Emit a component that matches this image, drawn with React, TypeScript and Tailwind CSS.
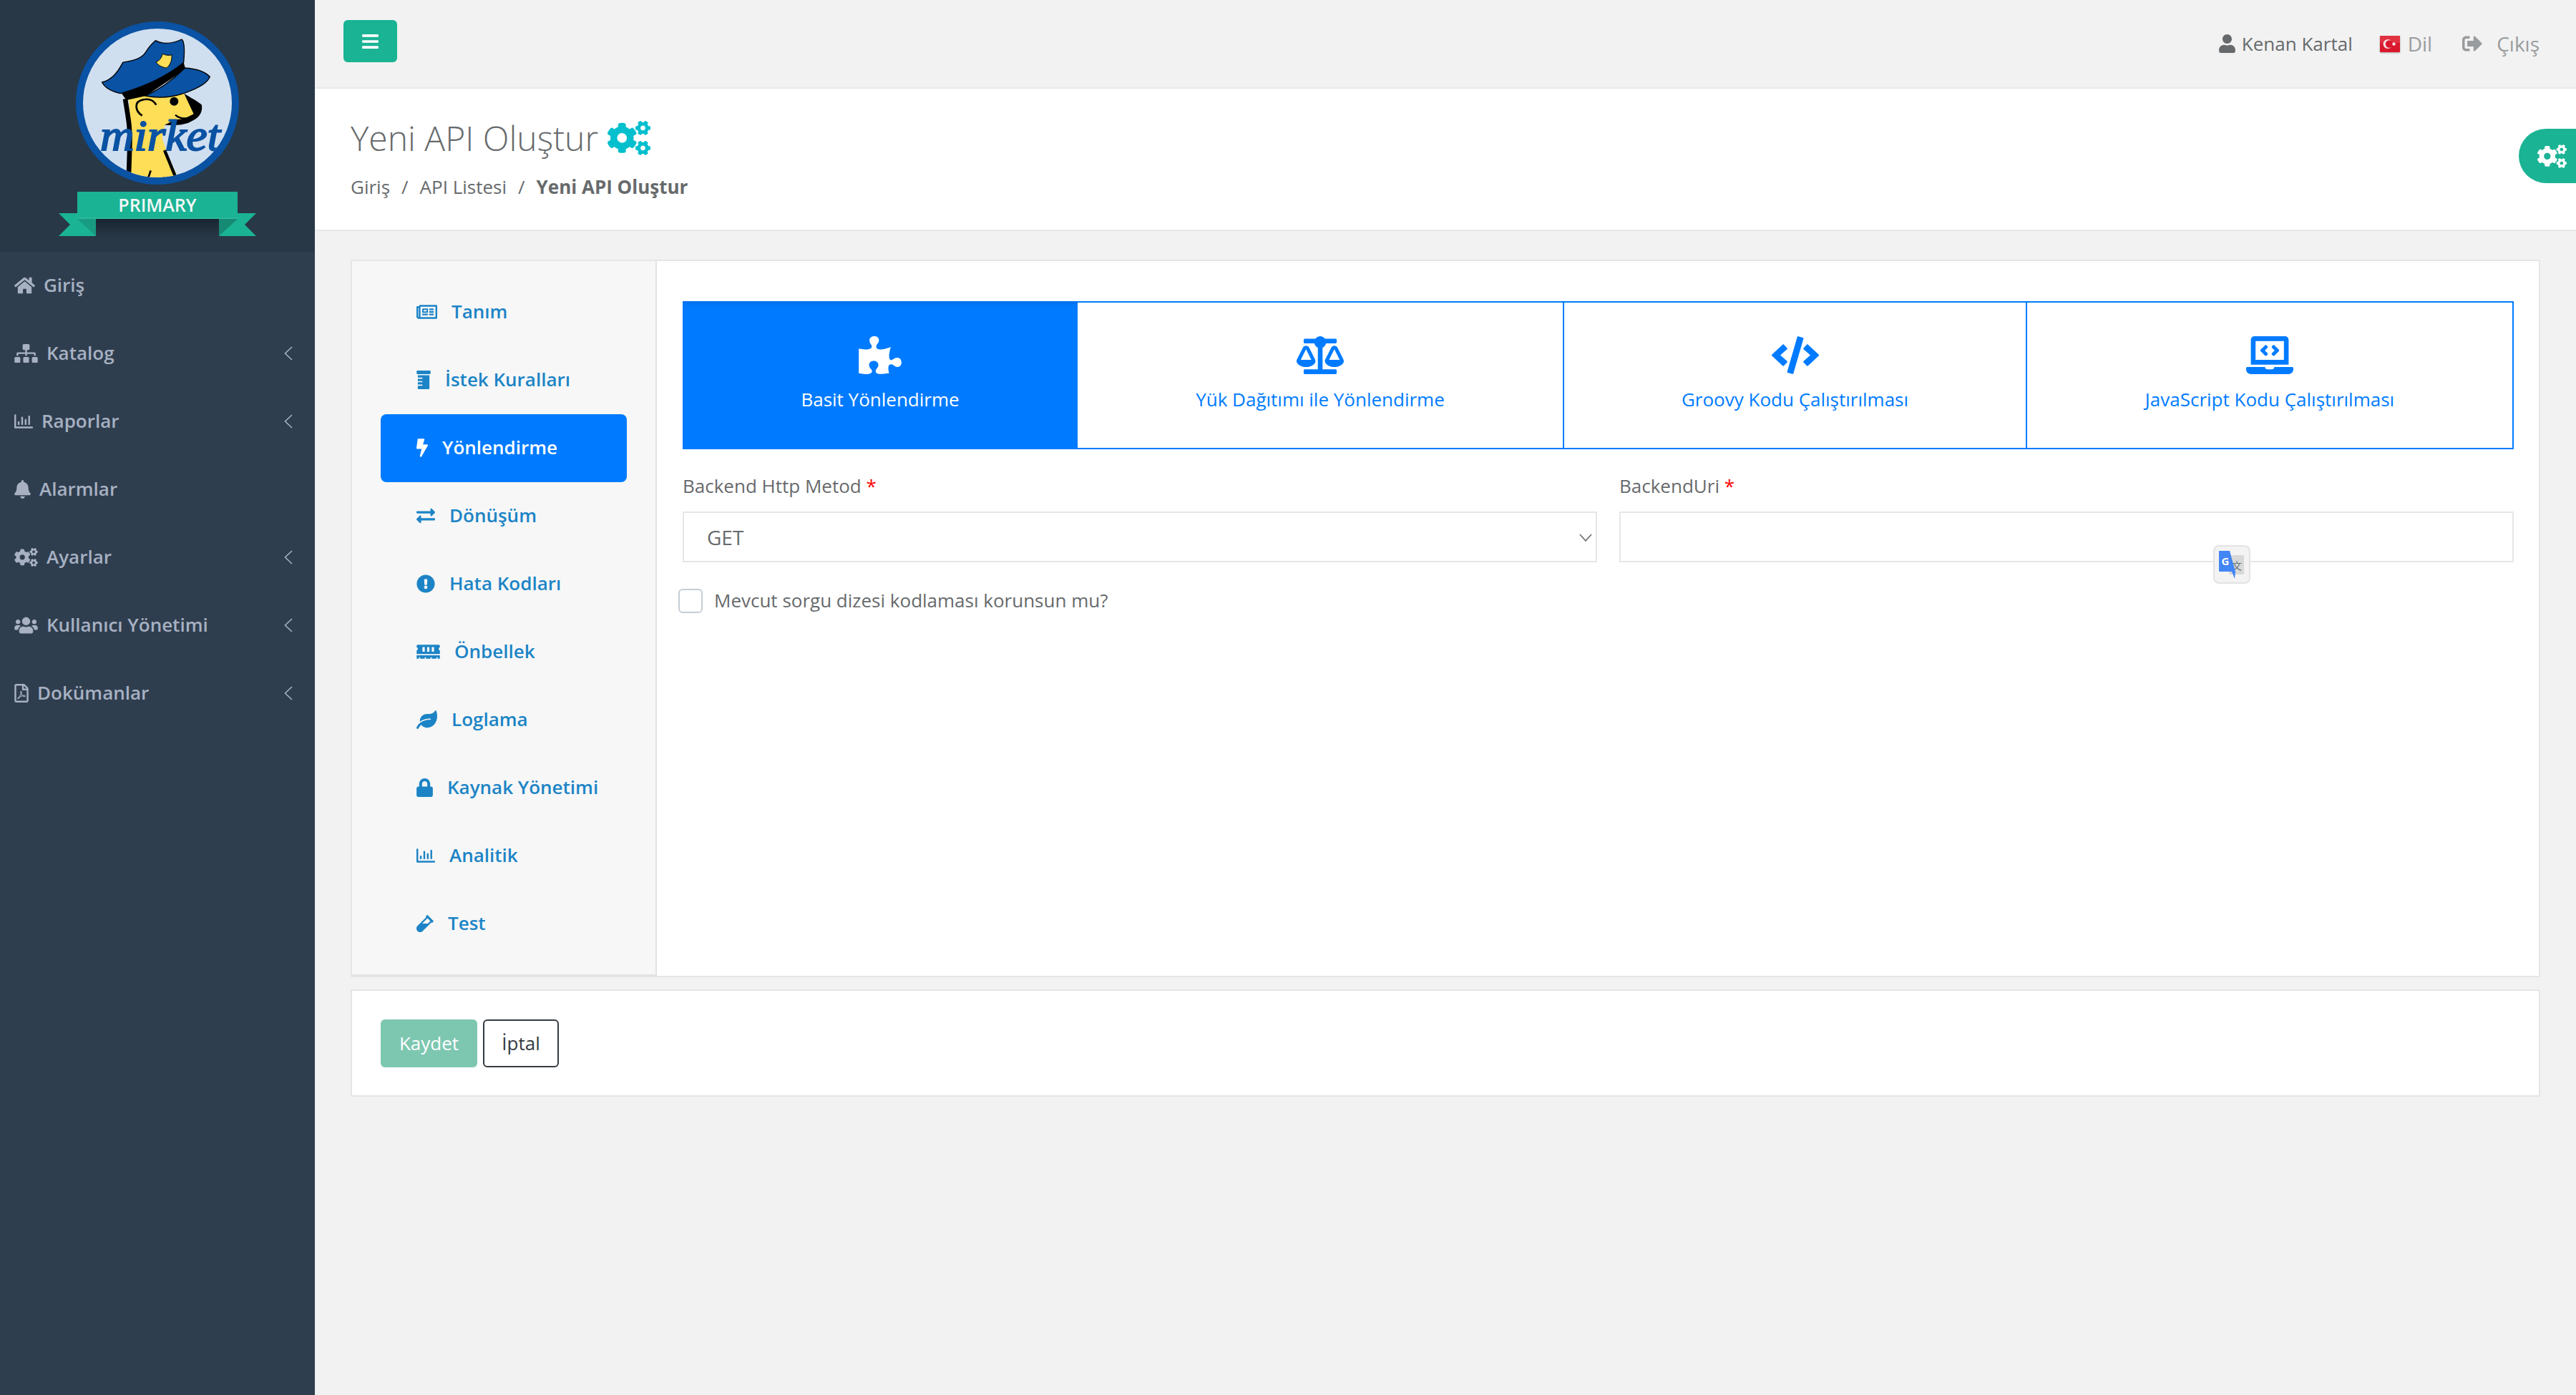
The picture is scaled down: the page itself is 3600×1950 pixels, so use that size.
import type { ReactNode } from "react";
import {
  FaBalanceScale,
  FaBars,
  FaBell,
  FaBolt,
  FaCode,
  FaCogs,
  FaExchangeAlt,
  FaExclamationCircle,
  FaHome,
  FaLaptopCode,
  FaLeaf,
  FaLock,
  FaMemory,
  FaPrescriptionBottle,
  FaPuzzlePiece,
  FaRegChartBar,
  FaRegFilePdf,
  FaRegNewspaper,
  FaSignOutAlt,
  FaSitemap,
  FaUser,
  FaUsers,
  FaVial,
} from "react-icons/fa";

const menu: { label: string; icon: ReactNode; arrow?: boolean }[] = [
  { label: "Giriş", icon: <FaHome className="h-[26px] w-[29px]" /> },
  { label: "Katalog", icon: <FaSitemap className="h-[26px] w-[33px]" />, arrow: true },
  { label: "Raporlar", icon: <FaRegChartBar className="h-[26px] w-[26px]" />, arrow: true },
  { label: "Alarmlar", icon: <FaBell className="h-[26px] w-[23px]" /> },
  { label: "Ayarlar", icon: <FaCogs className="h-[26px] w-[33px]" />, arrow: true },
  { label: "Kullanıcı Yönetimi", icon: <FaUsers className="h-[26px] w-[33px]" />, arrow: true },
  { label: "Dokümanlar", icon: <FaRegFilePdf className="h-[26px] w-[20px]" />, arrow: true },
];

const steps: { label: string; icon: ReactNode; active?: boolean }[] = [
  { label: "Tanım", icon: <FaRegNewspaper className="h-[26px] w-[29px]" /> },
  { label: "İstek Kuralları", icon: <FaPrescriptionBottle className="h-[26px] w-[20px]" /> },
  { label: "Yönlendirme", icon: <FaBolt className="h-[26px] w-[16px]" />, active: true },
  { label: "Dönüşüm", icon: <FaExchangeAlt className="h-[26px] w-[26px]" /> },
  { label: "Hata Kodları", icon: <FaExclamationCircle className="h-[26px] w-[26px]" /> },
  { label: "Önbellek", icon: <FaMemory className="h-[26px] w-[33px]" /> },
  { label: "Loglama", icon: <FaLeaf className="h-[26px] w-[29px]" /> },
  { label: "Kaynak Yönetimi", icon: <FaLock className="h-[26px] w-[23px]" /> },
  { label: "Analitik", icon: <FaRegChartBar className="h-[26px] w-[26px]" /> },
  { label: "Test", icon: <FaVial className="h-[26px] w-[24px]" /> },
];

const routes: { label: string; icon: ReactNode; width: string; active?: boolean }[] = [
  { label: "Basit Yönlendirme", icon: <FaPuzzlePiece className="h-[53px] w-[60px]" />, width: "w-[552px]", active: true },
  { label: "Yük Dağıtımı ile Yönlendirme", icon: <FaBalanceScale className="h-[53px] w-[66px]" />, width: "w-[680px]" },
  { label: "Groovy Kodu Çalıştırılması", icon: <FaCode className="h-[53px] w-[66px]" />, width: "w-[647px]" },
  { label: "JavaScript Kodu Çalıştırılması", icon: <FaLaptopCode className="h-[53px] w-[66px]" />, width: "flex-1" },
];

function Logo() {
  return (
    <svg width="440" height="352" viewBox="0 0 440 352">
      <defs>
        <clipPath id="badge">
          <circle cx="220" cy="144" r="104" />
        </clipPath>
        <linearGradient id="drop" x1="0" y1="0" x2="0" y2="1">
          <stop offset="0" stopColor="#111c28" stopOpacity="0.7" />
          <stop offset="1" stopColor="#111c28" stopOpacity="0" />
        </linearGradient>
      </defs>
      <circle cx="220" cy="144" r="109" fill="#d0dff0" stroke="#0a52a3" strokeWidth="10" />
      <g clipPath="url(#badge)">
        <g transform="scale(0.3333)">
          <path
            d="M540 405 L770 392 L820 462 L815 482 L760 505 L692 522 L680 580 L700 640 L745 745 L545 750 L552 600 Z"
            fill="#fedd57"
          />
          <path d="M525 415 C535 480 548 540 544 610 L540 730" fill="none" stroke="#000" strokeWidth="20" />
          <path d="M690 630 L735 740" fill="none" stroke="#000" strokeWidth="13" />
          <path d="M632 715 L622 745 M688 742 L686 750" fill="none" stroke="#000" strokeWidth="8" />
          <path
            d="M772 392 C800 410 830 425 846 440 C850 470 838 492 800 510 C775 524 745 525 690 525 L735 500 C760 505 790 490 812 478 Z"
            fill="#000"
          />
          <path d="M735 482 C748 494 765 498 782 496" fill="none" stroke="#000" strokeWidth="7" />
          <circle cx="730" cy="425" r="18" fill="#000" />
          <path
            d="M596 485 C566 465 560 425 600 418 C625 412 645 422 655 440"
            fill="none"
            stroke="#000"
            strokeWidth="8"
          />
          <path d="M510 392 L770 262 L778 290 L612 402 L530 420 Z" fill="#000" />
          <path
            d="M428 345 C465 335 490 310 515 262 C550 255 590 250 610 220 C625 195 640 180 652 170 C690 190 730 180 762 165 C775 175 775 210 770 262 C700 320 600 365 505 392 C475 385 440 370 428 345 Z"
            fill="#0a52a3"
            stroke="#000"
            strokeWidth="4"
          />
          <path
            d="M610 402 C680 370 730 330 775 285 C820 288 860 300 880 322 C870 350 825 372 780 388 C720 410 660 412 610 402 Z"
            fill="#0a52a3"
            stroke="#000"
            strokeWidth="4"
          />
          <path
            d="M654 260 C670 255 678 240 682 226 C695 232 708 234 720 230 C722 255 712 275 698 285 C680 282 664 275 654 260 Z"
            fill="#fedd57"
            stroke="#000"
            strokeWidth="3"
          />
        </g>
        <text
          x="140"
          y="210"
          fontSize="62"
          fontStyle="italic"
          fill="#0a52a3"
          stroke="#0a52a3"
          strokeWidth="2"
          textLength="168"
          lengthAdjust="spacingAndGlyphs"
          style={{ fontFamily: "'Liberation Serif', serif" }}
        >
          mirket
        </text>
      </g>
      <rect x="126" y="306" width="188" height="26" fill="url(#drop)" />
      <path d="M82 298 L108 298 L134 306 L134 330 L82 330 L98 314 Z" fill="#1ab394" />
      <path d="M358 298 L332 298 L306 306 L306 330 L358 330 L342 314 Z" fill="#1ab394" />
      <path d="M108 306 L134 306 L134 330 Z" fill="#179c82" />
      <path d="M332 306 L306 306 L306 330 Z" fill="#178a74" />
      <rect x="108" y="268" width="224" height="38" fill="#1ab394" />
      <rect x="108" y="304" width="224" height="2" fill="#2bb99c" />
      <text
        x="220"
        y="296"
        fontSize="25"
        fontWeight="600"
        fill="#f4f8f7"
        textAnchor="middle"
        style={{ fontFamily: "'Open Sans', sans-serif" }}
      >
        PRIMARY
      </text>
    </svg>
  );
}

function Flag() {
  return (
    <svg width="28" height="23" viewBox="0 0 28 23" className="drop-shadow-[0_1px_1px_rgba(0,0,0,0.3)]">
      <rect width="28" height="23" rx="1" fill="#d9182d" />
      <rect width="28" height="10" fill="#e8424f" opacity="0.6" />
      <circle cx="11" cy="11.5" r="6.5" fill="#f6dfe0" />
      <circle cx="13" cy="11.5" r="5.2" fill="#d9182d" />
      <circle cx="19.5" cy="11.5" r="2.2" fill="#f6dfe0" />
    </svg>
  );
}

function TranslateButton() {
  return (
    <div className="absolute left-[830px] top-[101px] flex h-[54px] w-[52px] items-center justify-center rounded-lg border-2 border-[#e3e3e3] bg-[#f3f3f3]">
      <svg width="38" height="40" viewBox="0 0 38 40">
        <rect x="15" y="7" width="21" height="27" rx="1" fill="#d8d8d8" />
        <text x="26" y="27" fontSize="14" fill="#5f7478" textAnchor="middle" style={{ fontFamily: "'Noto Sans CJK SC', sans-serif" }}>
          文
        </text>
        <path d="M1 1 L16 1 L24 30 L23 40 L19 30 L2 30 Q1 30 1 29 Z" fill="#4285f4" />
        <text x="10" y="21" fontSize="15" fontWeight="700" fill="#fff" textAnchor="middle" style={{ fontFamily: "'Open Sans', sans-serif" }}>
          G
        </text>
      </svg>
    </div>
  );
}

export default function App() {
  return (
    <div className="flex min-h-[1950px] w-full bg-[#f2f2f2] text-[26px] text-[#676a6c] [font-family:'Open_Sans',sans-serif]">
      <aside className="w-[440px] shrink-0 bg-[#2f3e4f]">
        <div className="h-[352px] bg-[#283847]">
          <Logo />
        </div>
        <nav className="-mt-[1px]">
          {menu.map((item) => (
            <div key={item.label} className="flex h-[95px] items-center pl-[20px] pr-[31px] font-semibold text-[#a7b1c2]">
              <span className="mr-[12px] shrink-0">{item.icon}</span>
              <span className="flex-1">{item.label}</span>
              {item.arrow && (
                <svg width="12" height="20" viewBox="0 0 12 20" fill="none" stroke="#a7b1c2" strokeWidth="1.6">
                  <path d="M11 1 L1.5 10 L11 19" />
                </svg>
              )}
            </div>
          ))}
        </nav>
      </aside>

      <main className="min-w-0 flex-1">
        <header className="flex h-[124px] items-start justify-between border-b-2 border-[#e7eaec] pl-[40px] pr-[51px]">
          <button className="mt-[28px] flex h-[59px] w-[75px] items-center justify-center rounded-md bg-[#1ab394] text-white">
            <FaBars className="h-[26px] w-[23px]" />
          </button>
          <div className="flex h-[122px] items-center">
            <FaUser className="mr-[9px] h-[26px] w-[23px]" />
            <span className="mr-[38px]">Kenan Kartal</span>
            <Flag />
            <span className="ml-[11px] mr-[42px] text-[28px] font-medium text-[#999c9e]">Dil</span>
            <FaSignOutAlt className="mr-[20px] h-[28px] w-[28px] text-[#999c9e]" />
            <span className="text-[28px] font-medium text-[#999c9e]">Çıkış</span>
          </div>
        </header>

        <section className="relative h-[199px] border-b-2 border-[#e7eaec] bg-white pl-[50px] pt-[39px]">
          <div className="flex items-center">
            <h1 className="text-[48px] font-light leading-[60px]">Yeni API Oluştur</h1>
            <FaCogs className="ml-[13px] h-[48px] w-[60px] text-[#04bfcd]" />
          </div>
          <div className="mt-[20px] flex leading-[36px]">
            <span>Giriş</span>
            <span className="mx-[16px]">/</span>
            <span>API Listesi</span>
            <span className="mx-[16px]">/</span>
            <strong className="font-bold">Yeni API Oluştur</strong>
          </div>
          <div className="absolute right-0 top-[56px] flex h-[76px] w-[80px] items-center rounded-l-full bg-[#1ab394] pl-[26px] text-white">
            <FaCogs className="h-[33px] w-[41px]" />
          </div>
        </section>

        <div className="px-[50px] pt-[40px]">
          <div className="flex h-[1003px] border-2 border-[#e5e5e5] bg-white">
            <div className="w-[426px] shrink-0 border-r-2 border-b-2 border-[#e2e2e2] bg-[#f7f7f7] px-[40px] pt-[24px]">
              {steps.map((step) => (
                <div
                  key={step.label}
                  className={
                    step.active
                      ? "flex h-[95px] w-[344px] items-center rounded-lg bg-[#007bff] pb-[2px] pl-[50px] font-semibold text-white"
                      : "flex h-[95px] w-[344px] items-center pb-[2px] pl-[50px] font-semibold text-[#1c84c6]"
                  }
                >
                  <span className="mr-[20px] shrink-0">{step.icon}</span>
                  {step.label}
                </div>
              ))}
            </div>

            <div className="min-w-0 flex-1 pl-[36px] pr-[35px] pt-[56px]">
              <div className="flex h-[207px] border-2 border-[#007bff]">
                {routes.map((route) => (
                  <div
                    key={route.label}
                    className={
                      route.active
                        ? `${route.width} -my-[2px] -ml-[2px] flex flex-col items-center bg-[#007bff] pt-[49px] text-white shadow-[inset_0_8px_8px_-6px_rgba(0,0,0,0.12)]`
                        : `${route.width} flex flex-col items-center border-r-2 border-[#007bff] pt-[47px] text-[#007bff] last:border-r-0`
                    }
                  >
                    <span>{route.icon}</span>
                    <span className="mt-[17px] leading-[36px]">{route.label}</span>
                  </div>
                ))}
              </div>

              <div className="mt-[33px] flex gap-[31px]">
                <div className="w-[1278px] shrink-0">
                  <label className="block leading-[36px]">
                    Backend Http Metod <span className="text-[#ff0000]">*</span>
                  </label>
                  <div className="relative mt-[18px]">
                    <select
                      defaultValue="GET"
                      className="h-[71px] w-full appearance-none border-2 border-[#e5e6e7] bg-white pl-[32px] text-[28px] text-[#676a6c]"
                    >
                      <option>GET</option>
                      <option>POST</option>
                    </select>
                    <svg
                      className="absolute right-[7px] top-[31px]"
                      width="18"
                      height="11"
                      viewBox="0 0 18 11"
                      fill="none"
                      stroke="#676a6c"
                      strokeWidth="1.6"
                    >
                      <path d="M1 1 L9 10 L17 1" />
                    </svg>
                  </div>
                </div>
                <div className="relative min-w-0 flex-1">
                  <label className="block leading-[36px]">
                    BackendUri <span className="text-[#ff0000]">*</span>
                  </label>
                  <input className="mt-[18px] block h-[71px] w-full border-2 border-[#e5e6e7] bg-white" />
                  <TranslateButton />
                </div>
              </div>

              <div className="-ml-[6px] mt-[34px] flex items-center">
                <span className="h-[34px] w-[34px] rounded-md border-2 border-[#c5cdd6] bg-white" />
                <span className="ml-[16px]">Mevcut sorgu dizesi kodlaması korunsun mu?</span>
              </div>
            </div>
          </div>

          <div className="mt-[17px] flex h-[150px] items-center gap-[8px] border-2 border-[#e5e5e5] bg-white pl-[40px]">
            <button className="h-[67px] w-[135px] rounded-md bg-[#7dc7b1] text-white">Kaydet</button>
            <button className="h-[67px] w-[106px] rounded-md border-2 border-[#343a40] text-[#343a40]">İptal</button>
          </div>
        </div>
      </main>
    </div>
  );
}
